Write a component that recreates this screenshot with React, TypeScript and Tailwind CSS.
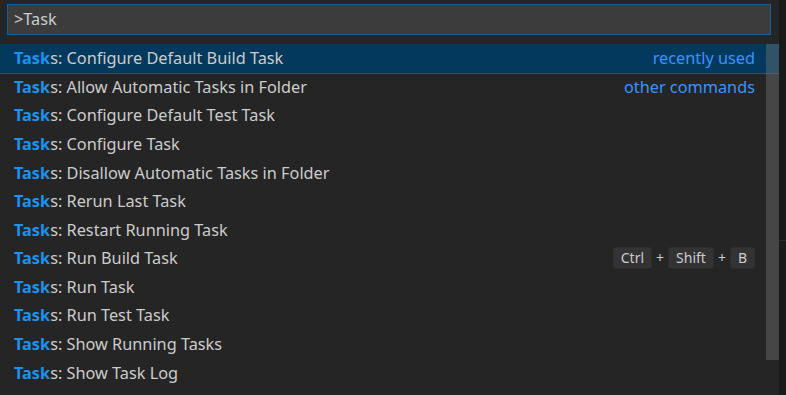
import React from "react";

const rows: { rest: string; desc?: string; sep?: boolean; keys?: string[] }[] = [
  { rest: "s: Configure Default Build Task", desc: "recently used" },
  { rest: "s: Allow Automatic Tasks in Folder", desc: "other commands", sep: true },
  { rest: "s: Configure Default Test Task" },
  { rest: "s: Configure Task" },
  { rest: "s: Disallow Automatic Tasks in Folder" },
  { rest: "s: Rerun Last Task" },
  { rest: "s: Restart Running Task" },
  { rest: "s: Run Build Task", keys: ["Ctrl", "Shift", "B"] },
  { rest: "s: Run Task" },
  { rest: "s: Run Test Task" },
  { rest: "s: Show Running Tasks" },
  { rest: "s: Show Task Log" },
];

export default function App() {
  return (
    <div
      className="w-[786px] h-[395px] bg-[#1e1e1e] flex overflow-hidden text-[#cccccc]"
      style={{ fontFamily: '"Noto Sans", "Open Sans", sans-serif' }}
    >
      <div className="w-[779px] h-full bg-[#252526] relative pt-[4px]">
        <div className="pl-[7px] pr-[8px]">
          <div className="h-[31px] border border-[#0e639c] bg-[#3c3c3c] flex items-center pl-[6px] text-[16.3px] text-[#cccccc]">
            &gt;Task
          </div>
        </div>
        <div className="mt-[9px]">
          {rows.map((r, i) => (
            <div
              key={i}
              className={
                "h-[28.6px] flex items-center pl-[14px] pr-[24px] text-[16.3px] leading-none " +
                (i === 0 ? "bg-[#04395e] " : "") +
                (r.sep ? "border-t border-[#3f4a56] " : "")
              }
            >
              <span className="flex-1 whitespace-nowrap">
                <span className="font-bold text-[#1a93f0]">Task</span>
                {r.rest}
              </span>
              {r.desc && <span className="text-[#3794ff]">{r.desc}</span>}
              {r.keys && (
                <span className="flex items-center gap-[4px] text-[14px]">
                  {r.keys.map((k, j) => (
                    <React.Fragment key={k}>
                      {j > 0 && <span>+</span>}
                      <span className="h-[22px] px-[7px] flex items-center rounded-[3px] bg-[#333334] border border-[#2d2d2e] text-[#cccccc]">
                        {k}
                      </span>
                    </React.Fragment>
                  ))}
                </span>
              )}
            </div>
          ))}
        </div>
        <div className="absolute left-[766px] top-[44px] w-[13px] h-[316px] bg-[rgba(121,121,121,0.4)]" />
      </div>
      <div className="flex-1 h-full bg-[#1a1a1a] flex flex-col">
        <div className="h-[240px]" />
        <div className="h-[1px] bg-[#2a2a2a]" />
      </div>
    </div>
  );
}
